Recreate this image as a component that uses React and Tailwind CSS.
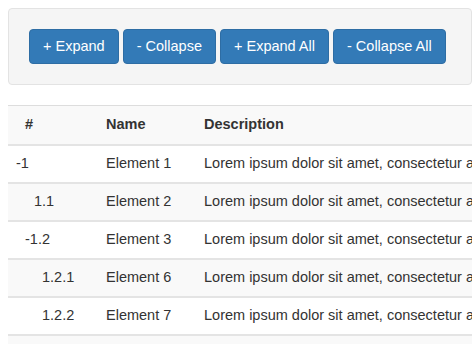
const rows = [
  { num: '-1', indent: 'pl-[8px]', name: 'Element 1' },
  { num: '1.1', indent: 'pl-[26px]', name: 'Element 2' },
  { num: '-1.2', indent: 'pl-[17px]', name: 'Element 3' },
  { num: '1.2.1', indent: 'pl-[34px]', name: 'Element 6' },
  { num: '1.2.2', indent: 'pl-[34px]', name: 'Element 7' },
];

const buttons = ['+ Expand', '- Collapse', '+ Expand All', '- Collapse All'];

export default function App() {
  return (
    <div className="w-[474px] h-[344px] overflow-hidden bg-white text-[#333] font-['Liberation_Sans',Arial,sans-serif] text-[14.5px]">
      <div className="pt-[8px] pl-[8px] pr-[2px]">
        {/* toolbar */}
        <div className="h-[77px] bg-[#f5f5f5] border border-[#e3e3e3] rounded-[4px] flex items-center gap-[4px] pl-[20px]">
          {buttons.map((b) => (
            <button
              key={b}
              className="h-[35px] px-[13px] bg-[#337ab7] border border-[#2e6da4] rounded-[4px] text-white leading-none whitespace-nowrap"
            >
              {b}
            </button>
          ))}
        </div>

        {/* tree table */}
        <div className="mt-[20px] overflow-hidden">
          <table className="w-[600px] border-collapse text-left">
            <thead>
              <tr className="h-[39px] bg-[#f9f9f9] border-t border-[#ddd]">
                <th className="w-[90px] pl-[17px] font-bold">#</th>
                <th className="w-[98px] pl-[8px] font-bold">Name</th>
                <th className="pl-[8px] font-bold">Description</th>
              </tr>
            </thead>
            <tbody>
              {rows.map((r, i) => (
                <tr
                  key={r.name}
                  className={`h-[38px] border-t-2 border-[#e4e4e4] ${i % 2 ? 'bg-[#f9f9f9]' : 'bg-white'}`}
                >
                  <td className={r.indent}>{r.num}</td>
                  <td className="pl-[8px] whitespace-nowrap">{r.name}</td>
                  <td className="pl-[8px] whitespace-nowrap">
                    Lorem ipsum dolor sit amet, consectetur adipiscing elit.
                  </td>
                </tr>
              ))}
              <tr className="h-[38px] border-t-2 border-[#e4e4e4] bg-[#f9f9f9]">
                <td />
                <td />
                <td />
              </tr>
            </tbody>
          </table>
        </div>
      </div>
    </div>
  );
}
